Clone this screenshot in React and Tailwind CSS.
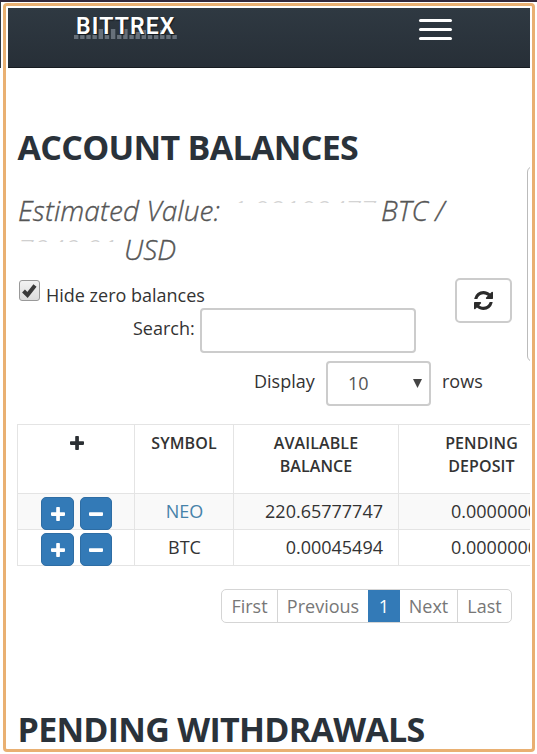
import React from "react";

const squares = [
  4, 4, 4, 4, 10, 4, 10, 4, 10, 4, 7, 9, 4, 4, 9, 4, 4,
];

function Logo() {
  return (
    <div className="relative ml-[66px] mt-[5px] h-[32px] w-[104px]">
      <svg className="absolute left-0 top-0 h-[32px] w-[104px]" viewBox="0 0 104 32">
        {squares.map((h, i) => (
          <rect key={i} x={i * 6.15} y={26 - h} width="4.4" height={h} fill="#67707a" />
        ))}
      </svg>
      <span className="absolute left-[2px] top-px font-['Roboto'] text-[23px] font-semibold leading-[26px] tracking-[1.15px] text-white [text-shadow:1px_1px_1px_#11161b]">
        BITTREX
      </span>
    </div>
  );
}

function Sign({ minus, dark }) {
  return (
    <svg className="h-[14px] w-[14px]" viewBox="0 0 14 14" fill={dark ? "#2b2f33" : "#ffffff"}>
      <rect x="0" y="5.2" width="14" height="3.7" rx="0.8" />
      {!minus && <rect x="5.2" y="0" width="3.7" height="14" rx="0.8" />}
    </svg>
  );
}

function Actions() {
  return (
    <div className="flex items-start gap-[6px] border-r border-[#e4e4e4] pl-[23px] pt-[3px]">
      <div className="flex h-[33px] w-[33px] shrink-0 items-center justify-center rounded-[5px] border border-[#2e6da4] bg-[#337ab7]">
        <Sign />
      </div>
      <div className="flex h-[33px] w-[32px] shrink-0 items-center justify-center rounded-[5px] border border-[#2e6da4] bg-[#337ab7]">
        <Sign minus />
      </div>
    </div>
  );
}

const cols = "grid grid-cols-[117px_99px_165px_165px]";

function Row({ symbol, link, balance, striped }) {
  return (
    <div className={cols + " h-[36px] border-b border-[#e4e4e4] " + (striped ? "bg-[#f9f9f9]" : "bg-white")}>
      <Actions />
      <div className={"border-r border-[#e4e4e4] pl-px text-center leading-[35px] " + (link ? "text-[#4682a9]" : "")}>{symbol}</div>
      <div className="border-r border-[#e4e4e4] pr-[15px] text-right leading-[35px]">{balance}</div>
      <div className="pl-[52px] leading-[35px]">0.00000000</div>
    </div>
  );
}

export default function App() {
  return (
    <div className="relative h-[754px] w-[537px] overflow-hidden border-t-2 border-[#33283a] bg-white pl-[3px] pt-px font-['Open_Sans',sans-serif] text-[18px] text-[#333]">
      <div className="absolute left-0 top-0 h-[66px] w-px bg-[#2f3740]" />
      <div className="h-[749px] w-[532px] rounded-[4px] border-[3px] border-[#e9b072] p-[2px]">
        <div className="relative h-[739px] w-[522px] overflow-hidden">
          <header className="flex h-[60px] border-b border-[#171c21] bg-linear-to-b from-[#2f3942] to-[#272f37]">
            <Logo />
            <div className="ml-[241px] mt-[11px] flex h-[21px] w-[33px] flex-col justify-between">
              <i className="h-[3px] rounded-sm bg-white" />
              <i className="h-[3px] rounded-sm bg-white" />
              <i className="h-[3px] rounded-sm bg-white" />
            </div>
          </header>

          <main className="pl-[9px]">
            <h1 className="ml-[0.5px] mt-[59px] h-[40px] whitespace-nowrap text-[34px] font-bold leading-[40px] tracking-[-0.7px] text-[#2a323a]">
              <span>ACCOUNT BALANCES</span>
            </h1>
            <div className="ml-px mt-[24px] h-[78px] whitespace-nowrap text-[28px] font-light italic leading-[39px] text-[#555] [-webkit-text-stroke:0.35px_#555]">
              <div className="flex">
                <span className="w-[213px] tracking-[0.1px]">Estimated Value:</span>
                <span className="w-[150px] text-[#d4d4d4] [-webkit-text-stroke:0px] [clip-path:inset(0_0_27px_0)]">1.08108477</span>
                <span>BTC /</span>
              </div>
              <div className="flex">
                <span className="w-[106px] text-[#d0d0d0] [-webkit-text-stroke:0px] [clip-path:inset(0_0_27px_0)]">7949.91</span>
                <span>USD</span>
              </div>
            </div>

            <div className="mt-[9px] flex h-[30px] items-start">
              <div className="ml-[2px] mt-[2px] flex h-[21px] w-[21px] items-center justify-center rounded-[3px] border border-[#999] bg-linear-to-b from-[#f2f2f2] to-[#dcdcdc]">
                <svg className="h-[15px] w-[15px]" viewBox="0 0 15 15" fill="none">
                  <path d="M1.5 8 L5.5 12 L13 2.5" stroke="#3a3a3a" strokeWidth="4" />
                </svg>
              </div>
              <span className="ml-[6px] mt-[3px] leading-[28px]">Hide zero balances</span>
              <div className="ml-auto mr-[18px] flex h-[45px] w-[57px] items-center justify-center rounded-[5px] border-2 border-[#ccc]">
                <svg className="h-[19px] w-[19px]" viewBox="0 0 1536 1536" fill="#2b2b2b">
                  <path d="M1511 928q0 5-1 7-64 268-268 434.500T764 1536q-146 0-282.500-55T238 1324l-129 129q-19 19-45 19t-45-19-19-45V960q0-26 19-45t45-19h448q26 0 45 19t19 45-19 45l-137 137q71 66 161 102t187 36q134 0 250-65t186-179q11-17 53-117 8-23 30-23h192q13 0 22.500 9.500t9.500 22.500zm25-800v448q0 26-19 45t-45 19h-448q-26 0-45-19t-19-45 19-45l138-138Q969 256 768 256q-134 0-250 65T332 500q-11 17-53 117-8 23-30 23H50q-13 0-22.500-9.500T18 608v-7q65-268 270-434.500T768 0q146 0 284 55.500T1297 212l130-129q19-19 45-19t45 19 19 45z" />
                </svg>
              </div>
            </div>

            <div className="flex h-[53px]">
              <span className="ml-[116px] mt-[6px] w-[67px] leading-[28px]">Search:</span>
              <div className="h-[45px] w-[216px] rounded-[4px] border-2 border-[#ccc] bg-white" />
            </div>
            <div className="flex h-[63px]">
              <span className="ml-[237px] mt-[6px] w-[72px] leading-[28px]">Display</span>
              <div className="flex h-[45px] w-[105px] items-center justify-between rounded-[4px] border-2 border-[#ccc] pl-[20px] pr-[7px] text-[#555]">
                <span>10</span>
                <svg className="h-[9px] w-[9px]" viewBox="0 0 9 9"><path d="M0 0h9L4.500 9z" fill="#444" /></svg>
              </div>
              <span className="ml-[11px] mt-[6px] leading-[28px]">rows</span>
            </div>

            <div className="h-[142px] w-[513px] overflow-hidden border-l border-t border-[#e4e4e4]">
              <div className={cols + " h-[69px] border-b border-[#e4e4e4] text-center text-[16px] font-semibold leading-[22.5px]"}>
                <div className="flex justify-center border-r border-[#e4e4e4] pl-px pt-[11px]"><Sign dark /></div>
                <div className="border-r border-[#e4e4e4] pt-[7px] tracking-[0.1px]">SYMBOL</div>
                <div className="border-r border-[#e4e4e4] pt-[7px] tracking-[0.1px]">AVAILABLE<br />BALANCE</div>
                <div className="pt-[7px] tracking-[0.1px]">PENDING<br />DEPOSIT</div>
              </div>
              <Row symbol="NEO" link balance="220.65777747" striped />
              <Row symbol="BTC" balance="0.00045494" />
            </div>

            <div className="ml-[204px] mt-[23px] flex h-[34px] w-[291px] overflow-hidden rounded-[5px] border border-[#d5d5d5] text-center leading-[32px] text-[#777]">
              <span className="w-[56px] border-r border-[#d5d5d5]">First</span>
              <span className="w-[90px]">Previous</span>
              <span className="-my-px h-[34px] w-[32px] bg-[#337ab7] leading-[34px] text-white">1</span>
              <span className="w-[58px] border-r border-[#d5d5d5]">Next</span>
              <span className="flex-1">Last</span>
            </div>

            <h1 className="ml-[0.5px] mt-[86px] h-[36px] whitespace-nowrap text-[34px] font-bold leading-[40px] tracking-[-0.72px] text-[#2a323a]">
              <span>PENDING WITHDRAWALS</span>
            </h1>
          </main>
          <div className="absolute left-[519px] top-[158px] h-[196px] w-[20px] rounded-[6px] border border-[#bbb]" />
        </div>
      </div>
    </div>
  );
}
